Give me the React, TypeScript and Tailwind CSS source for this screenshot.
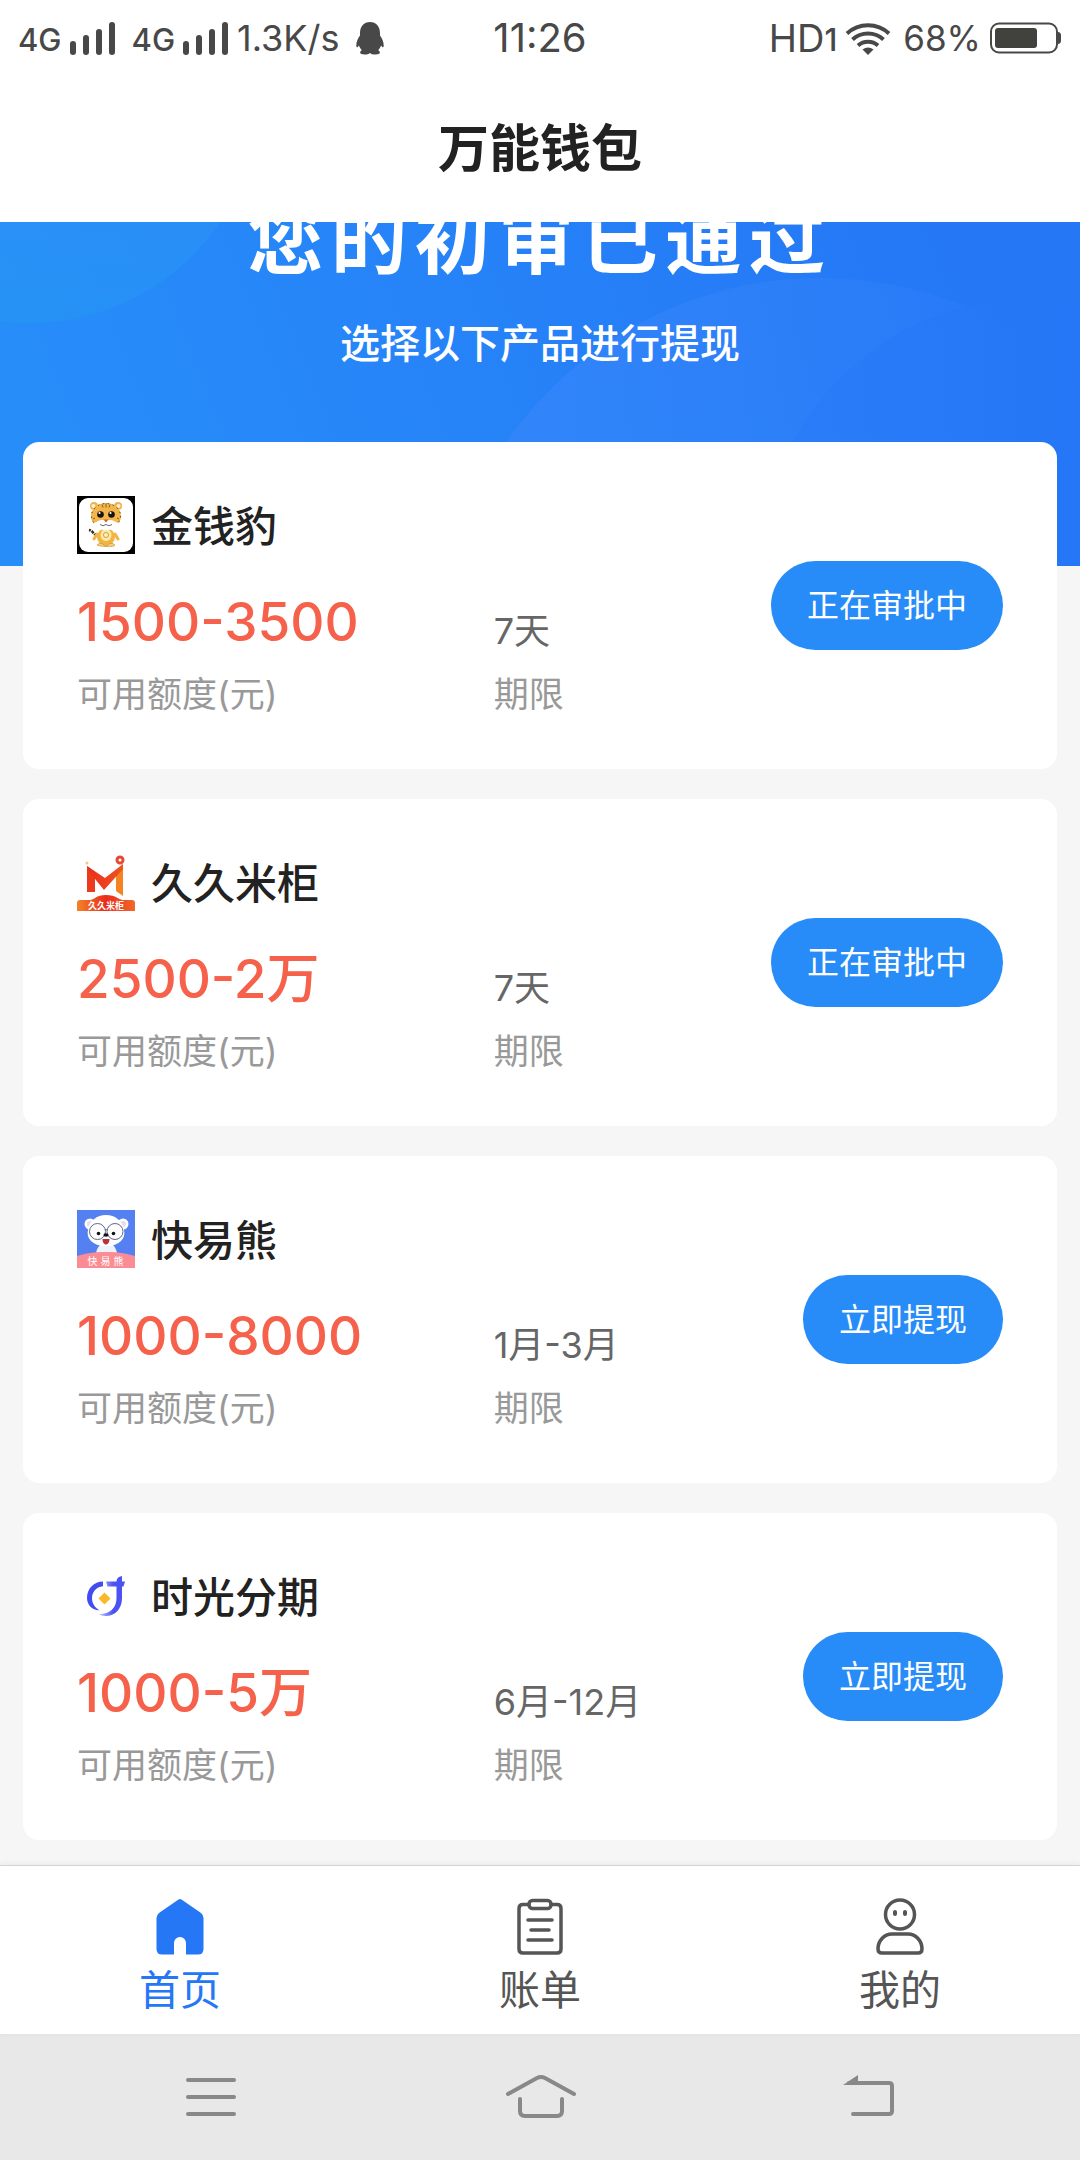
import type { ReactNode } from "react";

const Signal = () => (
  <svg width="46" height="33" viewBox="0 0 46 33" fill="#484848" aria-hidden="true">
    <rect x="0" y="19" width="6" height="14" rx="3" />
    <rect x="13" y="13" width="6" height="20" rx="3" />
    <rect x="26" y="7" width="6" height="26" rx="3" />
    <rect x="39" y="0" width="6" height="33" rx="3" />
  </svg>
);

const Penguin = () => (
  <svg width="28" height="33" viewBox="0 0 28 33" fill="#484848" aria-hidden="true">
    <path d="M14 0C8 0 4 4.500 4 11v2.500C1.800 16.500.300 20 .300 23.200c0 2.600 1 3 2.700.400.500 1.800 1.500 3.300 2.800 4.600-1.300.700-1.800 1.600-1.600 2.600.2 1.300 1.500 1.700 4.300 1.700 2.500 0 4.300-.5 5.500-1.500 1.200 1 3 1.500 5.500 1.500 2.800 0 4.100-.4 4.300-1.700.2-1-.3-1.900-1.600-2.600 1.300-1.300 2.300-2.800 2.800-4.600 1.700 2.600 2.700 2.200 2.700-.4 0-3.200-1.500-6.700-3.700-9.700V11C24 4.500 20 0 14 0z" />
  </svg>
);

const Wifi = () => (
  <svg width="46" height="33" viewBox="0 0 46 33" fill="none" stroke="#484848" strokeWidth="4" aria-hidden="true">
    <path d="M2 11.500a31 31 0 0 1 42 0" />
    <path d="M7.500 17.500a23 23 0 0 1 31 0" />
    <path d="M13 23.500a15 15 0 0 1 20 0" />
    <path d="M17.500 27.500 23 33l5.500-5.500a9 9 0 0 0-11 0z" fill="#484848" stroke="none" />
  </svg>
);

const Battery = () => (
  <svg width="73" height="32" viewBox="0 0 73 32" aria-hidden="true">
    <rect x="2" y="1.500" width="66" height="29" rx="8" fill="none" stroke="#484848" strokeWidth="2" />
    <rect x="6" y="6" width="42" height="20" rx="3" fill="#41423d" />
    <path d="M69 10c2 0 3 1.500 3 3v6c0 1.500-1 3-3 3z" fill="#484848" />
  </svg>
);

const LeopardLogo = () => (
  <svg width="58" height="58" viewBox="0 0 58 58" aria-hidden="true">
    <rect width="58" height="58" fill="#000" />
    <rect x="2" y="2" width="54" height="54" rx="9" fill="#fff" />
    <path d="M20 39c-4 0-3-4-8-5" fill="none" stroke="#3d2a14" strokeWidth="2.500" strokeDasharray="3 1" />
    <ellipse cx="29" cy="41" rx="9" ry="9" fill="#f2b544" />
    <ellipse cx="29" cy="39" rx="5.500" ry="6" fill="#fbe9a9" />
    <circle cx="29" cy="39" r="2.500" fill="#fff3c8" stroke="#d99a2b" />
    <path d="M20 38l-3 5M38 38l3 5" stroke="#f2b544" strokeWidth="3" strokeLinecap="round" />
    <path d="M20 49q4-4 8 1h2q4-5 8-1-1 2-9 1.500T20 49z" fill="#f6cf7a" stroke="#c58b2c" strokeWidth=".600" />
    <circle cx="17" cy="10" r="4" fill="#f0b24a" />
    <circle cx="16.500" cy="10" r="2" fill="#fff0da" />
    <circle cx="41" cy="10" r="4" fill="#f0b24a" />
    <circle cx="41.500" cy="10" r="2" fill="#fff0da" />
    <ellipse cx="29" cy="20" rx="15" ry="13" fill="#f3b64b" />
    <ellipse cx="29" cy="20" rx="14.500" ry="12.500" fill="none" stroke="#4a3419" strokeWidth="1" strokeDasharray="1.500 3.500" />
    <path d="M25 8.500l1 3M29 7.500v4M33 8.500l-1 3M16 23l2-1M42 23l-2-1" stroke="#8a5f28" strokeWidth="1" />
    <path d="M16 27c3 0 5-3 8.500-3h9c3.500 0 5.500 3 8.500 3-2 6-8 7-13 7s-11-1-13-7z" fill="#fff" />
    <circle cx="23.500" cy="18.500" r="3.300" fill="#17130f" />
    <circle cx="34.500" cy="18.500" r="3.300" fill="#17130f" />
    <circle cx="22.500" cy="17" r="1.100" fill="#fff" />
    <circle cx="33.500" cy="17" r="1.100" fill="#fff" />
    <path d="M26.500 23.500h5L29 26.500z" fill="#c9603b" />
    <path d="M23 28.500q3 2.500 6 0 3 2.500 6 0" fill="none" stroke="#6e6e70" strokeWidth="1" />
  </svg>
);

const CabinetLogo = () => (
  <svg width="58" height="58" viewBox="0 0 58 58" aria-hidden="true">
    <defs>
      <linearGradient id="cabinet" x1="0" x2="1">
        <stop offset="0" stopColor="#f2842a" />
        <stop offset=".5" stopColor="#ea2b1b" />
        <stop offset="1" stopColor="#f0682a" />
      </linearGradient>
      <linearGradient id="letter" x1="0" x2="1">
        <stop offset="0" stopColor="#ec2a1d" />
        <stop offset="1" stopColor="#f0551f" />
      </linearGradient>
    </defs>
    <path d="M10 13l8 6v20h-8z" fill="#ec3a1d" />
    <path d="M46 11v32l-7-5V18z" fill="#f5831f" />
    <path d="M10 13l18 12 18-14v5L27 37 14 21z" fill="url(#letter)" />
    <circle cx="43" cy="7" r="3" fill="#fff" stroke="#e24a36" strokeWidth="3" />
    <circle cx="10" cy="10" r="1.500" fill="#f7c57c" />
    <path d="M0 58V50q0-3 3-3h10c4 0 6-5 16-5s13 5 17 5h9q3 0 3 3v8z" fill="url(#cabinet)" />
    <text x="29" y="56" textAnchor="middle" fontSize="9" fontWeight="700" fill="#fff">久久米柜</text>
  </svg>
);

const BearLogo = () => (
  <svg width="58" height="58" viewBox="0 0 58 58" aria-hidden="true">
    <rect width="58" height="58" fill="#5480f2" />
    <circle cx="13" cy="14" r="5.500" fill="#fff" />
    <circle cx="13" cy="14" r="3" fill="#e4e0e6" />
    <circle cx="46" cy="14" r="5.500" fill="#fff" />
    <circle cx="46" cy="14" r="3" fill="#e4e0e6" />
    <path d="M19 45c0-5 2-8 4-10h13c2 2 4 5 4 10z" fill="#eef2fb" />
    <path d="M29 5c9 0 17 6 18 15 2 8-4 16-18 16S9 28 11 20C12 11 20 5 29 5z" fill="#fff" />
    <g fill="none" stroke="#5d6787" strokeWidth="1">
      <circle cx="20.500" cy="21.500" r="8" />
      <circle cx="38" cy="21.500" r="8" />
      <path d="M28 20q1.300-1 2.500 0" />
    </g>
    <circle cx="21.500" cy="23.500" r="1.800" fill="#10131e" />
    <circle cx="36.500" cy="23.500" r="1.800" fill="#10131e" />
    <ellipse cx="29" cy="25" rx="2.600" ry="1.700" fill="#10131e" />
    <path d="M25.500 29h7c0 3-1.500 5.500-3.500 5.500S25.500 32 25.500 29z" fill="#b7323e" />
    <path d="M0 46c8-2 14-4 29-4s21 2 29 4v12H0z" fill="#fb8c94" />
    <text x="30" y="55" textAnchor="middle" fontSize="10" letterSpacing="3" fill="#fff">快易熊</text>
  </svg>
);

const TimeLogo = () => (
  <svg width="58" height="58" viewBox="0 0 58 58" aria-hidden="true">
    <defs>
      <linearGradient id="tail" x1="0" x2="1">
        <stop offset="0" stopColor="#c9ccfb" />
        <stop offset=".55" stopColor="#4a52f4" />
      </linearGradient>
    </defs>
    <path d="M26 14.500v4.800c-7 .700-11 6-11 12 0 5 3 9.500 7.500 12C15.500 43.500 10 38 10 31c0-9.500 7-16.500 16-16.500z" fill="#434cf3" />
    <path d="M29 14.500h10.500c0-3 2-5 5.500-5.500v5.500h3l-1.500 5H45V31c0 11-7 18-16.500 18-2.500 0-5-.7-7-2 10 .5 18-5 18-16V19.500h-9z" fill="url(#tail)" />
    <path d="M27.500 25.500l6 6-6 6-6-6z" fill="#fbb829" />
  </svg>
);

interface Product {
  name: string;
  logo: ReactNode;
  amount: string;
  term: string;
  action: string;
}

const products: Product[] = [
  { name: "金钱豹", logo: <LeopardLogo />, amount: "1500-3500", term: "7天", action: "正在审批中" },
  { name: "久久米柜", logo: <CabinetLogo />, amount: "2500-2万", term: "7天", action: "正在审批中" },
  { name: "快易熊", logo: <BearLogo />, amount: "1000-8000", term: "1月-3月", action: "立即提现" },
  { name: "时光分期", logo: <TimeLogo />, amount: "1000-5万", term: "6月-12月", action: "立即提现" },
];

const ProductCard = ({ product }: { product: Product }) => (
  <li className="grid grid-cols-[45%_1fr_auto] rounded-2xl bg-white px-[54px] pt-[54px] pb-[50px]">
    <div className="col-span-2 flex items-center gap-4">
      {product.logo}
      <h2 className="pt-1 text-[42px] leading-[54px] font-medium text-[#222]">{product.name}</h2>
    </div>
    <button
      type="button"
      className="col-start-3 row-span-3 row-start-1 mb-1 self-center rounded-full bg-[#278cf8] px-9 pt-px text-[32px] leading-[88px] text-white"
    >
      {product.action}
    </button>
    <p className="mt-8 text-[53px] leading-[72px] font-medium text-[#f5614a]">{product.amount}</p>
    <p className="mt-8 self-end text-[36px] leading-[54px] text-[#666]">{product.term}</p>
    <p className="mt-3 text-[35px] leading-[49px] text-[#999]">可用额度(元)</p>
    <p className="mt-3 text-[35px] leading-[49px] text-[#999]">期限</p>
  </li>
);

const HomeIcon = () => (
  <svg width="58" height="58" viewBox="0 0 58 58" aria-hidden="true">
    <path
      d="M27.500 1.600q1.500-1 3 0L50 15q2.500 2 2.500 5v31q0 5.500-5.500 5.500H35V45a6 6 0 0 0-12 0v11.500H11q-5.500 0-5.500-5.500V20q0-3 2.500-5z"
      fill="#2577f6"
    />
  </svg>
);

const BillIcon = () => (
  <svg width="58" height="58" viewBox="0 0 58 58" fill="none" stroke="#555" strokeWidth="3.500" strokeLinecap="round" aria-hidden="true">
    <path d="M18 6.500h-6q-4 0-4 4V51q0 4 4 4h34q4 0 4-4V10.500q0-4-4-4h-6" />
    <rect x="18" y="2.500" width="22" height="8" rx="3.500" />
    <path d="M17 22h24M20 32h18M17 42h24" />
  </svg>
);

const PersonIcon = () => (
  <svg width="58" height="58" viewBox="0 0 58 58" fill="none" stroke="#555" strokeWidth="3.500" strokeLinecap="round" aria-hidden="true">
    <circle cx="29" cy="16.500" r="14.500" />
    <path d="M24 14v2M34 14v2" strokeWidth="4" />
    <path d="M21 36h16c8 0 14 7 14 15q0 4-4 4H11q-4 0-4-4c0-8 6-15 14-15z" />
  </svg>
);

const tabs = [
  { label: "首页", icon: <HomeIcon />, active: true },
  { label: "账单", icon: <BillIcon />, active: false },
  { label: "我的", icon: <PersonIcon />, active: false },
];

export default function App() {
  return (
    <div className="flex min-h-screen flex-col bg-[#f6f6f6] font-['Inter','Noto_Sans_CJK_SC',sans-serif]">
      <div className="grid grid-cols-[1fr_auto_1fr] items-center bg-white px-[18px] pt-1 leading-[64px] text-[#484848]">
        <div className="flex items-center">
          <span className="mr-2 pt-1 text-[31px] font-medium">4G</span>
          <Signal />
          <span className="mr-2 ml-4 pt-1 text-[31px] font-medium">4G</span>
          <Signal />
          <span className="mr-4 ml-2 text-[36px]">1.3K/s</span>
          <Penguin />
        </div>
        <time className="text-[40px]">11:26</time>
        <div className="flex items-center justify-end">
          <span className="text-[38px]">HD</span>
          <span className="mr-2 pt-1 text-[31px] font-medium">1</span>
          <Wifi />
          <span className="mr-2 ml-3 text-[35px]">68%</span>
          <Battery />
        </div>
      </div>

      <header className="relative z-10 bg-white pt-[39px] pb-[35px] text-center">
        <h1 className="text-[51px] leading-[76px] font-semibold text-[#222]">万能钱包</h1>
      </header>

      <main className="flex-1">
        <section className="relative overflow-hidden bg-linear-to-r from-[#278df9] to-[#2575f6] pb-[194px] text-center text-white">
          <svg className="absolute inset-0 h-full w-full" viewBox="0 222 1080 344" preserveAspectRatio="none" aria-hidden="true">
            <defs>
              <linearGradient id="sky" gradientUnits="userSpaceOnUse" x1="100" y1="560" x2="950" y2="222">
                <stop offset="0" stopColor="#278df9" />
                <stop offset="1" stopColor="#2577f6" />
              </linearGradient>
              <linearGradient id="glowLeft" x1="0" y1="0" x2="0" y2="1">
                <stop offset="0.500" stopColor="#3493f6" stopOpacity=".4" />
                <stop offset="1" stopColor="#2496f4" stopOpacity=".6" />
              </linearGradient>
              <linearGradient id="glowRight" x1="0" y1="0" x2="1" y2="0">
                <stop offset="0" stopColor="#3f88fb" stopOpacity=".5" />
                <stop offset=".8" stopColor="#3f88fb" stopOpacity=".1" />
              </linearGradient>
              <linearGradient id="glowEdge" x1="0" y1="0" x2="1" y2="0">
                <stop offset="0" stopColor="#2a7cf9" stopOpacity=".8" />
                <stop offset=".6" stopColor="#2576f6" stopOpacity=".8" />
              </linearGradient>
            </defs>
            <rect y="222" width="1080" height="344" fill="url(#sky)" />
            <circle cx="30" cy="94" r="229" fill="url(#glowLeft)" />
            <circle cx="820" cy="660" r="382" fill="url(#glowRight)" />
            <circle cx="1033" cy="571" r="273" fill="url(#glowEdge)" />
          </svg>
          <p className="relative -mt-5 text-[76px] leading-[76px] font-bold tracking-widest">您的初审已通过</p>
          <p className="relative mt-[38px] text-[40px] leading-[56px] font-medium">选择以下产品进行提现</p>
        </section>

        <ul className="relative -mt-[124px] flex flex-col gap-[30px] px-[23px] pb-[25px]">
          {products.map((product) => (
            <ProductCard key={product.name} product={product} />
          ))}
        </ul>
      </main>

      <nav className="relative grid grid-cols-3 border-t border-[#d4d4d4] bg-white pt-8 pb-4 shadow-[0_-1px_6px_rgba(0,0,0,0.06)]">
        {tabs.map((tab) => (
          <a
            key={tab.label}
            href="#"
            aria-current={tab.active ? "page" : undefined}
            className="flex flex-col items-center gap-1.5 text-[41px] leading-[56px] text-[#555] aria-[current=page]:text-[#2577f6]"
          >
            {tab.icon}
            {tab.label}
          </a>
        ))}
      </nav>

      <div className="grid grid-cols-3 justify-items-center bg-[#e8e8e8] px-[46px] py-[35px]">
        <button type="button" aria-label="菜单">
          <svg width="56" height="56" viewBox="0 0 56 56" fill="none" stroke="#888" strokeWidth="4" strokeLinecap="round">
            <path d="M5 11h46M5 28h46M5 45h46" />
          </svg>
        </button>
        <button type="button" aria-label="主屏幕">
          <svg width="74" height="56" viewBox="0 0 74 56" fill="none" stroke="#888" strokeWidth="4" strokeLinecap="round">
            <path d="M5 25 34 9q4-2 8 0L71 25M17 30v12q0 5 5 5h32q5 0 5-5V30" />
          </svg>
        </button>
        <button type="button" aria-label="返回">
          <svg width="56" height="56" viewBox="0 0 56 56" fill="none" stroke="#888" strokeWidth="4" strokeLinecap="round">
            <path d="M8 14h40q3 0 3 3v25q0 3-3 3H12" />
            <path d="M2 16 17 6v10z" fill="#888" stroke="none" />
          </svg>
        </button>
      </div>
    </div>
  );
}
